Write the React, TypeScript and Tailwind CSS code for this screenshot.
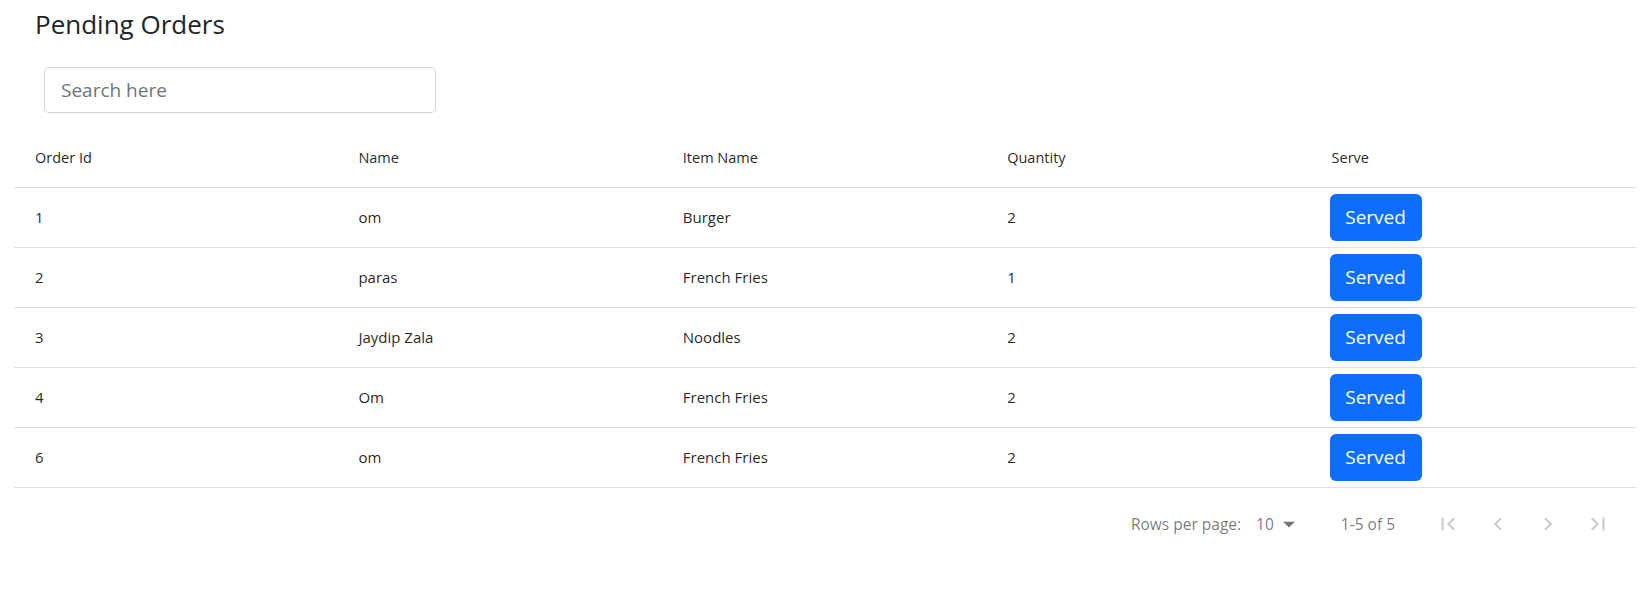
import React, { useState } from 'react';

type Order = { id: number; name: string; item: string; qty: number };

const orders: Order[] = [
  { id: 1, name: 'om', item: 'Burger', qty: 2 },
  { id: 2, name: 'paras', item: 'French Fries', qty: 1 },
  { id: 3, name: 'Jaydip Zala', item: 'Noodles', qty: 2 },
  { id: 4, name: 'Om', item: 'French Fries', qty: 2 },
  { id: 6, name: 'om', item: 'French Fries', qty: 2 },
];

const PageIcon = ({ d }: { d: string }) => (
  <button className="w-10 h-10 flex items-center justify-center mx-[5px] cursor-default" disabled>
    <svg viewBox="0 0 24 24" className="w-[26px] h-[26px] fill-black/20">
      <path d={d} />
    </svg>
  </button>
);

function App() {
  const [search, setSearch] = useState('');
  const rows = orders.filter(
    (o) => o.name.toLowerCase().includes(search.toLowerCase()) || o.item.toLowerCase().includes(search.toLowerCase())
  );

  return (
    <div className="min-h-screen bg-white px-[14px] text-[#212529]" style={{ fontFamily: '"Open Sans", "Noto Sans", sans-serif' }}>
      <h3 className="pt-[9px] pl-[21px] text-[26px] leading-[1.2] font-normal text-[#212529]">Pending Orders</h3>

      <div className="mt-[27px] pl-[30px]">
        <input
          type="text"
          value={search}
          onChange={(e) => setSearch(e.target.value)}
          placeholder="Search here"
          className="w-[392px] h-[46px] px-4 rounded-[5px] border border-[#ced4da] text-[19px] text-[#212529] placeholder:text-[#6c757d] outline-none"
        />
      </div>

      <div className="mt-[15px] text-[15px] text-black/[0.87]">
        <div className="grid grid-cols-5 h-[60px] items-center border-b border-black/[0.12] font-medium text-[14.5px]">
          <div className="pl-[21px]">Order Id</div>
          <div className="pl-[20px]">Name</div>
          <div className="pl-[20px]">Item Name</div>
          <div className="pl-[20px]">Quantity</div>
          <div className="pl-[20px]">Serve</div>
        </div>
        {rows.map((o) => (
          <div key={o.id} className="grid grid-cols-5 h-[60px] items-center border-b border-black/[0.12]">
            <div className="pl-[21px]">{o.id}</div>
            <div className="pl-[20px]">{o.name}</div>
            <div className="pl-[20px]">{o.item}</div>
            <div className="pl-[20px]">{o.qty}</div>
            <div className="pl-[18px]">
              <button className="h-[47px] w-[92px] rounded-[6px] bg-[#0d6efd] text-white text-[19px]">Served</button>
            </div>
          </div>
        ))}

        <div className="flex items-center justify-end h-[72px] pr-[13px] text-[15.5px] text-black/[0.54]">
          <span>Rows per page:</span>
          <div className="flex items-center ml-[15px] mr-[38px]">
            <span>10</span>
            <svg viewBox="0 0 24 24" className="w-[28px] h-[28px] fill-black/[0.54] ml-[1px]">
              <path d="M7 10l5 5 5-5z" />
            </svg>
          </div>
          <span className="mr-[28px]">1-5 of 5</span>
          <div className="flex items-center">
            <PageIcon d="M18.41 16.59L13.82 12l4.59-4.59L17 6l-6 6 6 6zM6 6h2v12H6z" />
            <PageIcon d="M15.41 7.41L14 6l-6 6 6 6 1.41-1.41L10.83 12z" />
            <PageIcon d="M10 6L8.59 7.41 13.17 12l-4.58 4.59L10 18l6-6z" />
            <PageIcon d="M5.59 7.41L10.18 12l-4.59 4.59L7 18l6-6-6-6zM16 6h2v12h-2z" />
          </div>
        </div>
      </div>
    </div>
  );
}

export default App;
